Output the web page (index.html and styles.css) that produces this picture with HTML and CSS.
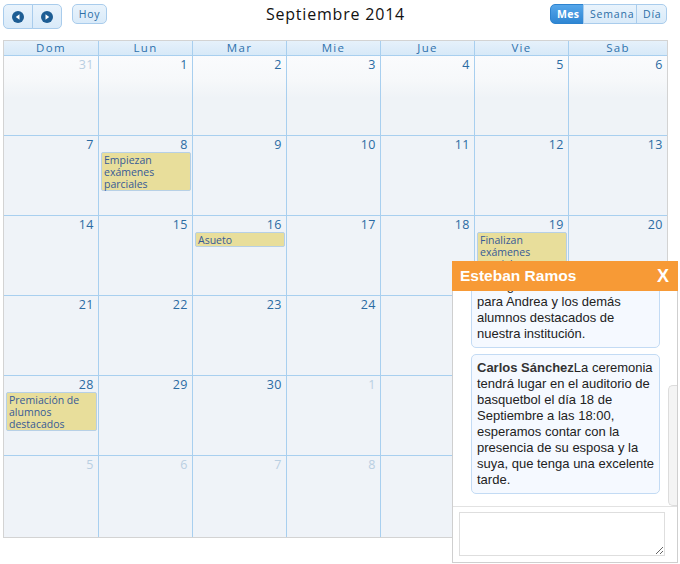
FILE: index.html
```html
<!DOCTYPE html>
<html lang="es">
<head>
<meta charset="utf-8">
<title>Calendario</title>
<link rel="stylesheet" href="styles.css">
</head>
<body>
<div class="page">
  <div class="toolbar">
    <div class="tb-left">
      <div class="btn-group nav">
        <button class="btn icon-btn" aria-label="Anterior">
          <svg width="12" height="12" viewBox="0 0 12 12"><circle cx="6" cy="6" r="6" fill="#1d5d94"/><path d="M7.5 3.2 L3.8 6 L7.5 8.8 Z" fill="#fff"/></svg>
        </button>
        <button class="btn icon-btn" aria-label="Siguiente">
          <svg width="12" height="12" viewBox="0 0 12 12"><circle cx="6" cy="6" r="6" fill="#1d5d94"/><path d="M4.5 3.2 L8.2 6 L4.5 8.8 Z" fill="#fff"/></svg>
        </button>
      </div>
      <button class="btn single">Hoy</button>
    </div>
    <h1 class="title">Septiembre 2014</h1>
    <div class="tb-right">
      <div class="btn-group views">
        <button class="btn active">Mes</button>
        <button class="btn">Semana</button>
        <button class="btn">Día</button>
      </div>
    </div>
  </div>

  <div class="calendar">
    <div class="dow">Dom</div><div class="dow">Lun</div><div class="dow">Mar</div><div class="dow">Mie</div><div class="dow">Jue</div><div class="dow">Vie</div><div class="dow">Sab</div>

    <div class="day first other"><span class="num">31</span></div>
    <div class="day first"><span class="num">1</span></div>
    <div class="day first"><span class="num">2</span></div>
    <div class="day first"><span class="num">3</span></div>
    <div class="day first"><span class="num">4</span></div>
    <div class="day first"><span class="num">5</span></div>
    <div class="day first"><span class="num">6</span></div>

    <div class="day"><span class="num">7</span></div>
    <div class="day"><span class="num">8</span><div class="event">Empiezan exámenes parciales</div></div>
    <div class="day"><span class="num">9</span></div>
    <div class="day"><span class="num">10</span></div>
    <div class="day"><span class="num">11</span></div>
    <div class="day"><span class="num">12</span></div>
    <div class="day"><span class="num">13</span></div>

    <div class="day"><span class="num">14</span></div>
    <div class="day"><span class="num">15</span></div>
    <div class="day"><span class="num">16</span><div class="event">Asueto</div></div>
    <div class="day"><span class="num">17</span></div>
    <div class="day"><span class="num">18</span></div>
    <div class="day"><span class="num">19</span><div class="event">Finalizan exámenes parciales</div></div>
    <div class="day"><span class="num">20</span></div>

    <div class="day"><span class="num">21</span></div>
    <div class="day"><span class="num">22</span></div>
    <div class="day"><span class="num">23</span></div>
    <div class="day"><span class="num">24</span></div>
    <div class="day"><span class="num">25</span></div>
    <div class="day"><span class="num">26</span></div>
    <div class="day"><span class="num">27</span></div>

    <div class="day"><span class="num">28</span><div class="event">Premiación de alumnos destacados</div></div>
    <div class="day"><span class="num">29</span></div>
    <div class="day"><span class="num">30</span></div>
    <div class="day other"><span class="num">1</span></div>
    <div class="day other"><span class="num">2</span></div>
    <div class="day other"><span class="num">3</span></div>
    <div class="day other"><span class="num">4</span></div>

    <div class="day other"><span class="num">5</span></div>
    <div class="day other"><span class="num">6</span></div>
    <div class="day other"><span class="num">7</span></div>
    <div class="day other"><span class="num">8</span></div>
    <div class="day other"><span class="num">9</span></div>
    <div class="day other"><span class="num">10</span></div>
    <div class="day other"><span class="num">11</span></div>
  </div>

  <div class="chat">
    <div class="chat-head">
      <span class="chat-name">Esteban Ramos</span>
      <span class="chat-close">X</span>
    </div>
    <div class="chat-body">
      <div class="messages">
        <div class="msg"><b>Esteban Ramos</b>Buenas tardes, le informamos<br>que se llevará a cabo la<br>ceremonia de<br>entrega de reconocimientos<br>para Andrea y los demás<br>alumnos destacados de<br>nuestra institución.</div>
        <div class="msg"><b>Carlos Sánchez</b>La ceremonia<br>tendrá lugar en el auditorio de<br>basquetbol el día 18 de<br>Septiembre a las 18:00,<br>esperamos contar con la<br>presencia de su esposa y la<br>suya, que tenga una excelente<br>tarde.</div>
      </div>
      <div class="scroll-thumb"></div>
    </div>
    <div class="chat-foot">
      <textarea class="chat-input"></textarea>
    </div>
  </div>
</div>
</body>
</html>
```
FILE: styles.css
```css
* { box-sizing: border-box; }
html, body { margin: 0; padding: 0; background: #fff; }
body { font-family: "Open Sans", "DejaVu Sans", sans-serif; }

.page {
  position: relative;
  width: 680px;
  height: 564px;
  overflow: hidden;
}

/* toolbar */
.toolbar {
  display: grid;
  grid-template-columns: 1fr auto 1fr;
  align-items: start;
  width: 664px;
  margin-left: 3px;
  height: 40px;
  padding-top: 4px;
}
.tb-left { display: flex; gap: 10px; align-items: flex-start; }
.tb-right { display: flex; justify-content: flex-end; }
.title {
  margin: 0;
  font-family: "Open Sans", sans-serif;
  font-weight: 400;
  font-size: 16px;
  letter-spacing: 0.8px;
  line-height: 20px;
  color: #111;
  padding-left: 1px;
}

.btn {
  font-family: "Open Sans", sans-serif;
  font-size: 10.5px;
  letter-spacing: 0.8px;
  color: #2c6ea6;
  background: linear-gradient(#e9f3fc, #d9eaf9);
  border: 1px solid #a9ccec;
  border-radius: 5px;
  height: 20px;
  padding: 0 7px;
  line-height: 18px;
  cursor: pointer;
}
.btn.single { width: 35px; padding: 0; }

.btn-group { display: flex; }
.btn-group .btn { border-radius: 0; }
.btn-group .btn:first-child { border-radius: 5px 0 0 5px; }
.btn-group .btn:last-child { border-radius: 0 5px 5px 0; }
.btn-group .btn + .btn { border-left: 1px solid #a9ccec; margin-left: -1px; }

.nav .icon-btn {
  width: 30px;
  height: 25px;
  padding: 0;
  display: flex;
  align-items: center;
  justify-content: center;
}
.nav .icon-btn svg { display: block; }

.views .btn { padding: 0 6px; }
.views .btn:nth-child(1) { width: 34px; }
.views .btn:nth-child(2) { width: 54px; }
.views .btn:nth-child(3) { width: 31px; }
.views .btn.active {
  background: linear-gradient(#55a6ea, #2f86d3);
  border-color: #2d83cf;
  color: #fff;
  font-weight: 700;
  letter-spacing: 0.3px;
}

/* calendar grid */
.calendar {
  margin-left: 3px;
  width: 665px;
  display: grid;
  grid-template-columns: 94px 93px 93px 93px 93px 93px 1fr;
  grid-template-rows: 14px repeat(5, 79px) 81px;
  gap: 1px;
  background: #a8cfef;
  border: 1px solid #d3d3d3;
}
.dow {
  background: linear-gradient(#e6f1fb, #d7e9f8);
  color: #2e72ad;
  font-size: 11.5px;
  letter-spacing: 1.3px;
  text-align: center;
  line-height: 14px;
}
.day {
  background: #eff3f8;
  padding: 1px 1px 0 2px;
  display: flex;
  flex-direction: column;
  align-items: stretch;
  min-width: 0;
}
.day.first {
  background: linear-gradient(#fafbfd 0px, #f6f8fa 25px, #eff3f7 42px, #eff3f7 100%);
}
.num {
  text-align: right;
  font-size: 12.5px;
  line-height: 15px;
  color: #2b6ba3;
  padding-right: 3px;
  letter-spacing: 0.5px;
}
.other .num { color: #b9cfe2; }
.event {
  background: #e8de9b;
  border: 1px solid #b7d0e6;
  border-radius: 2px;
  color: #375a96;
  font-size: 10.5px;
  line-height: 12px;
  padding: 1px 2px 0 2px;
  min-height: 14px;
}

/* chat window (floating) */
.chat {
  position: absolute;
  left: 452px;
  top: 261px;
  width: 226px;
  height: 302px;
  background: #fff;
  border: 1px solid #cfcfcf;
  border-top: none;
  display: flex;
  flex-direction: column;
  font-family: "Liberation Sans", Arial, sans-serif;
}
.chat-head {
  height: 30px;
  margin: 0 -1px;
  background: #f79a36;
  color: #fff;
  display: flex;
  align-items: center;
  justify-content: space-between;
  padding: 0 9px 0 8px;
  flex: none;
}
.chat-name { font-weight: 700; font-size: 15.5px; }
.chat-close { font-weight: 700; font-size: 18px; }
.chat-body {
  position: relative;
  height: 216px;
  flex: none;
  overflow: hidden;
  border-bottom: 1px solid #e2e2e2;
}
.messages {
  height: 100%;
  display: flex;
  flex-direction: column;
  justify-content: flex-end;
  gap: 6px;
  padding: 0 0 12px 18px;
}
.msg {
  width: 189px;
  flex: none;
  background: #f5f9ff;
  border: 1px solid #c3dbf4;
  border-radius: 5px;
  padding: 5px 4px 5px 5px;
  font-size: 13px;
  line-height: 16px;
  color: #222;
  white-space: nowrap;
}
.msg b { color: #333; }
.scroll-thumb {
  position: absolute;
  right: 0;
  top: 94px;
  width: 9px;
  height: 121px;
  border: 1px solid #dcdcdc;
  border-right: none;
  border-radius: 5px 0 0 5px;
  background: #f4f4f4;
}
.chat-foot {
  flex: 1;
  padding: 5px 11px 6px 6px;
}
.chat-input {
  display: block;
  width: 206px;
  height: 44px;
  border: 1px solid #dedede;
  resize: both;
  margin: 0;
  font-family: "Liberation Sans", Arial, sans-serif;
}
```
